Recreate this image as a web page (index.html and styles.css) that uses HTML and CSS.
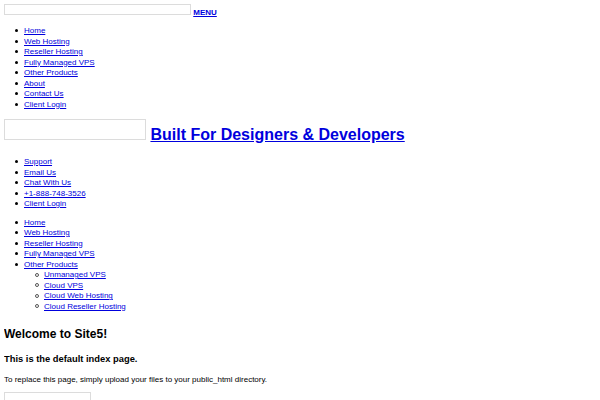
FILE: index.html
```html
<!DOCTYPE html>
<html>
<head>
<meta charset="utf-8">
<title>Site5</title>
<link rel="stylesheet" href="styles.css">
</head>
<body>
<div class="top"><span class="box box-search"></span> <a class="menu" href="#">MENU</a></div>
<ul class="nav">
  <li><a href="#">Home</a></li>
  <li><a href="#">Web Hosting</a></li>
  <li><a href="#">Reseller Hosting</a></li>
  <li><a href="#">Fully Managed VPS</a></li>
  <li><a href="#">Other Products</a></li>
  <li><a href="#">About</a></li>
  <li><a href="#">Contact Us</a></li>
  <li><a href="#">Client Login</a></li>
</ul>
<h1 class="brand"><span class="box box-logo"></span> <a href="#">Built For Designers &amp; Developers</a></h1>
<ul class="nav">
  <li><a href="#">Support</a></li>
  <li><a href="#">Email Us</a></li>
  <li><a href="#">Chat With Us</a></li>
  <li><a href="#">+1-888-748-3526</a></li>
  <li><a href="#">Client Login</a></li>
</ul>
<ul class="nav nav-main">
  <li><a href="#">Home</a></li>
  <li><a href="#">Web Hosting</a></li>
  <li><a href="#">Reseller Hosting</a></li>
  <li><a href="#">Fully Managed VPS</a></li>
  <li><a href="#">Other Products</a>
    <ul class="sub">
      <li><a href="#">Unmanaged VPS</a></li>
      <li><a href="#">Cloud VPS</a></li>
      <li><a href="#">Cloud Web Hosting</a></li>
      <li><a href="#">Cloud Reseller Hosting</a></li>
    </ul>
  </li>
</ul>
<h2 class="welcome">Welcome to Site5!</h2>
<h3 class="sub-title">This is the default index page.</h3>
<p class="note">To replace this page, simply upload your files to your public_html directory.</p>
<div class="box box-bottom"></div>
</body>
</html>
```
FILE: styles.css
```css
html, body {
  background: #fff;
}
body {
  margin: 4px;
  font-family: "Liberation Sans", Arial, sans-serif;
  font-size: 8px;
  line-height: 10.5px;
  color: #000;
}
a {
  color: #0000dd;
  text-decoration: underline;
}
.box {
  display: inline-block;
  box-sizing: border-box;
  border: 1px solid #dcdcdc;
  background: #fff;
}
.top {
  line-height: 10px;
}
.box-search {
  width: 187px;
  height: 11px;
}
.menu {
  font-weight: bold;
}
.nav {
  margin: 8px 0;
  padding-left: 20px;
  list-style: none;
}
.nav-main {
  margin-top: 7px;
}
.nav li::before {
  content: "";
  display: inline-block;
  box-sizing: border-box;
  width: 3px;
  height: 3px;
  margin-left: -9px;
  margin-right: 6px;
  border-radius: 50%;
  background: #000;
  vertical-align: middle;
}
.sub {
  margin: 0;
  padding-left: 20px;
  list-style: none;
}
.nav .sub li::before {
  width: 4px;
  height: 4px;
  margin-left: -9px;
  margin-right: 5px;
  background: transparent;
  border: 1px solid #555;
}
.brand {
  margin: 9px 0 12px;
  font-size: 16px;
  line-height: 21px;
  font-weight: bold;
}
.box-logo {
  width: 142px;
  height: 21px;
  vertical-align: baseline;
}
.welcome {
  margin: 14.75px 0 13px;
  font-size: 12px;
  line-height: 14px;
  font-weight: bold;
}
.sub-title {
  margin: 13px 0 10px;
  font-size: 9.36px;
  line-height: 11px;
  font-weight: bold;
}
.note {
  margin: 10px 0 6.5px;
}
.box-bottom {
  display: block;
  width: 87px;
  height: 30px;
}
```
